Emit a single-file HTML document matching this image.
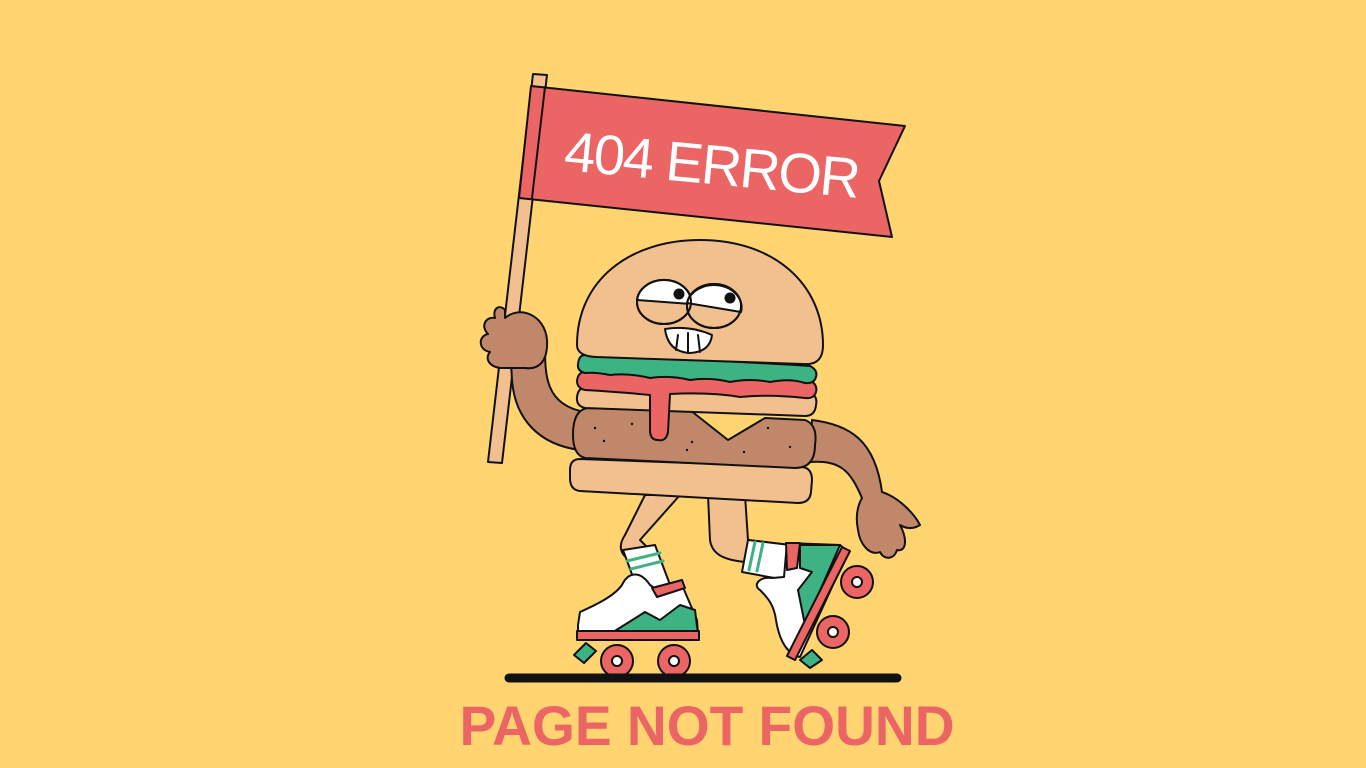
<!DOCTYPE html>
<html><head><meta charset="utf-8"><style>
html,body{margin:0;padding:0;background:#FFD471;width:1366px;height:768px;overflow:hidden}
svg{display:block}
</style></head><body>
<svg width="1366" height="768" viewBox="0 0 1366 768" xmlns="http://www.w3.org/2000/svg" stroke="#111" stroke-width="2" stroke-linejoin="round" stroke-linecap="round">
<rect width="1366" height="768" fill="#FFD471" stroke="none"/>
<!-- pole -->
<polygon points="533,74 547,75 502,463 488,462" fill="#F2C08F"/>
<!-- flag -->
<polygon points="531,86 905,126 879,181 892,237 519,198" fill="#EC6565"/>
<line x1="545" y1="87" x2="532" y2="198"/>
<text x="563" y="170" transform="rotate(5.4 563 170)" font-family="Liberation Sans, sans-serif" font-size="56" fill="#fff" stroke="none" textLength="297">404 ERROR</text>
<!-- left arm -->
<path d="M580,450 C540,445 515,420 512,380 L510,345 L545,345 C545,375 545,405 585,412 Z" fill="#C0876A"/>
<!-- left hand -->
<path d="M505,318 C520,305 545,315 547,340 C548,360 540,370 525,368 L500,368 C488,366 485,358 490,352 C478,350 478,336 488,334 C480,326 486,316 495,318 C492,308 500,304 505,310 Z" fill="#C0876A"/>
<!-- right arm -->
<path d="M812,420 C850,425 875,440 882,492 C900,498 915,515 920,525 C912,530 905,528 900,525 C908,540 906,552 897,550 C894,560 884,560 880,552 C870,556 860,545 858,530 C855,515 858,505 862,498 C850,470 840,460 810,462 Z" fill="#C0876A"/>
<!-- legs -->
<path d="M645,495 L625,535 C615,550 625,560 635,560 L655,555 L640,540 L680,495 Z" fill="#F2C08F"/>
<path d="M708,495 L710,540 C712,555 725,560 745,562 L790,565 L790,545 L748,540 L745,495 Z" fill="#F2C08F"/>
<!-- socks -->
<polygon points="623,550 655,545 672,590 640,596" fill="#fff"/>
<line x1="627" y1="561" x2="660" y2="553" stroke="#3DB384" stroke-width="3"/>
<line x1="631" y1="569" x2="663" y2="561" stroke="#3DB384" stroke-width="3"/>
<polygon points="748,540 790,545 785,580 742,572" fill="#fff"/>
<line x1="755" y1="542" x2="749" y2="570" stroke="#3DB384" stroke-width="3"/>
<line x1="763" y1="543" x2="757" y2="571" stroke="#3DB384" stroke-width="3"/>
<!-- left skate -->
<path d="M578,625 L580,612 C600,603 615,595 622,585 C628,572 640,570 650,585 L660,592 L682,585 L697,620 L698,634 L578,634 Z" fill="#fff"/>
<path d="M610,634 L645,612 L660,620 L680,605 L695,610 L698,634 Z" fill="#3DB384"/>
<polygon points="652,588 682,580 685,588 657,597" fill="#EC6565"/>
<rect x="577" y="631" width="122" height="9" fill="#EC6565"/>
<polygon points="574,655 586,643 596,651 584,663" fill="#3DB384"/>
<circle cx="617" cy="661" r="16" fill="#EC6565"/><circle cx="617" cy="661" r="5" fill="#fff"/>
<circle cx="674" cy="661" r="16" fill="#EC6565"/><circle cx="674" cy="661" r="5" fill="#fff"/>
<!-- right skate -->
<circle cx="857" cy="582" r="16" fill="#EC6565"/><circle cx="857" cy="582" r="5" fill="#fff"/>
<circle cx="833" cy="632" r="16" fill="#EC6565"/><circle cx="833" cy="632" r="5" fill="#fff"/>
<path d="M787,543 L840,545 L848,552 L800,657 C790,655 780,645 776,620 C774,605 768,598 760,590 C752,585 760,576 772,578 L784,577 Z" fill="#fff"/>
<path d="M800,545 L840,545 L805,625 L798,590 L812,572 L800,568 Z" fill="#3DB384"/>
<polygon points="786,543 800,543 797,568 787,570" fill="#EC6565"/>
<polygon points="842,547 850,551 795,660 787,656" fill="#EC6565"/>
<polygon points="800,660 812,650 822,660 810,668" fill="#3DB384"/>
<!-- bottom bun -->
<path d="M580,459 L802,467 Q812,468 812,480 L811,492 Q810,503 798,503 L580,491 Q570,490 570,478 L570,470 Q570,459 580,459 Z" fill="#F2C08F"/>
<!-- patty -->
<path d="M590,408 L690,410 L728,440 L765,418 L805,420 Q818,425 815,445 Q815,468 795,468 L585,458 Q573,455 573,435 Q573,408 590,408 Z" fill="#C0876A"/>
<g fill="#111" stroke="none"><circle cx="595" cy="428" r="1.2"/><circle cx="632" cy="424" r="1.2"/><circle cx="604" cy="441" r="1.2"/><circle cx="692" cy="442" r="1.2"/><circle cx="687" cy="450" r="1.2"/><circle cx="744" cy="452" r="1.2"/><circle cx="768" cy="428" r="1.2"/><circle cx="790" cy="447" r="1.2"/></g>
<!-- cheese bun -->
<path d="M585,388 L810,393 Q818,396 816,405 Q815,416 805,416 L585,408 Q576,406 577,397 Q578,388 585,388 Z" fill="#F2C08F"/>
<!-- tomato + drip -->
<path d="M585,372 Q620,370 650,375 Q680,372 710,378 Q750,380 810,380 Q818,385 816,392 Q814,399 805,398 Q770,394 740,397 Q710,392 670,394 L668,432 Q666,442 658,440 Q650,440 650,430 L650,395 Q620,392 585,390 Q577,388 577,381 Q578,372 585,372 Z" fill="#EC6565"/>
<!-- lettuce -->
<path d="M585,355 Q620,356 660,358 Q700,360 740,362 Q780,364 810,366 Q818,370 816,377 Q814,384 805,383 Q790,378 770,382 Q750,378 730,382 Q710,377 690,380 Q670,375 650,378 Q630,373 610,375 Q595,372 585,373 Q577,371 578,364 Q579,355 585,355 Z" fill="#3DB384"/>
<!-- top bun -->
<path d="M577,345 C577,280 630,240 700,240 C775,240 823,285 823,345 Q823,366 803,364 L596,357 Q577,356 577,345 Z" fill="#F2C08F"/>
<!-- eyes -->
<ellipse cx="664" cy="302" rx="27" ry="22" fill="#F2C08F"/>
<path d="M637,300 A27,22 0 0 1 691,304 Z" fill="#fff"/>
<ellipse cx="714" cy="306" rx="27" ry="22" fill="#F2C08F"/>
<path d="M687,303 A27,22 0 0 1 741,312 Z" fill="#fff"/>
<ellipse cx="664" cy="302" rx="27" ry="22" fill="none"/>
<ellipse cx="714" cy="306" rx="27" ry="22" fill="none"/>
<circle cx="679" cy="294" r="5.5" fill="#111" stroke="none"/>
<circle cx="730" cy="298" r="5.5" fill="#111" stroke="none"/>
<!-- mouth -->
<path d="M665,329 Q690,325 712,335 Q710,352 690,353 Q668,352 665,329 Z" fill="#fff"/>
<line x1="678" y1="335" x2="676" y2="350"/><line x1="688" y1="333" x2="688" y2="353"/><line x1="698" y1="335" x2="700" y2="352"/>
<!-- ground -->
<line x1="509" y1="678" x2="897" y2="678" stroke="#111" stroke-width="9"/>
<text x="707" y="745" text-anchor="middle" font-family="Liberation Sans, sans-serif" font-weight="bold" font-size="56" fill="#EC6565" stroke="none" textLength="495" lengthAdjust="spacingAndGlyphs">PAGE NOT FOUND</text>
</svg>
</body></html>
